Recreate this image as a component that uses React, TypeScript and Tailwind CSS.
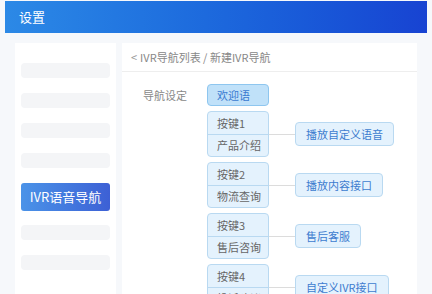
const font = { fontFamily: '"Noto Sans CJK SC", "Noto Sans", sans-serif' };

const keys = [
  { key: "按键1", name: "产品介绍", action: "播放自定义语音" },
  { key: "按键2", name: "物流查询", action: "播放内容接口" },
  { key: "按键3", name: "售后咨询", action: "售后客服" },
  { key: "按键4", name: "投诉建议", action: "自定义IVR接口" },
];

function SideMenu() {
  return (
    <aside className="w-[101px] shrink-0 bg-white pt-[20px] px-[6px] flex flex-col">
      <div className="h-[15px] bg-[#f4f5f7] rounded-sm" />
      <div className="h-[15px] bg-[#f4f5f7] rounded-sm mt-[15px]" />
      <div className="h-[15px] bg-[#f4f5f7] rounded-sm mt-[15px]" />
      <div className="h-[15px] bg-[#f4f5f7] rounded-sm mt-[15px]" />
      <div className="h-[28px] mt-[15px] rounded-[3px] bg-gradient-to-r from-[#4b93e8] to-[#3d60d5] text-white text-[13px] flex items-center justify-center">
        IVR语音导航
      </div>
      <div className="h-[15px] bg-[#f4f5f7] rounded-sm mt-[14px]" />
      <div className="h-[15px] bg-[#f4f5f7] rounded-sm mt-[15px]" />
    </aside>
  );
}

function KeyRow({ item }: { item: (typeof keys)[number] }) {
  return (
    <div className="flex items-center shrink-0">
      <div className="w-[62px] h-[46px] border border-[#b9d9f1] bg-[#e4f2fd] rounded-[4px] flex flex-col text-[11px] text-[#666]">
        <div className="flex-1 flex items-center pl-[9px] border-b border-[#b9d9f1]">{item.key}</div>
        <div className="flex-1 flex items-center pl-[9px]">{item.name}</div>
      </div>
      <div className="w-[26px] h-px bg-[#dcdcdc]" />
      <div className="h-[24px] px-[10px] border border-[#b9d9f1] bg-[#e4f2fd] rounded-[4px] flex items-center text-[11px] text-[#3d7ccf]">
        {item.action}
      </div>
    </div>
  );
}

export default function App() {
  return (
    <div className="w-[432px] h-[294px] overflow-hidden bg-[#f6f8fb]" style={font}>
      {/* Header */}
      <div className="mx-[5px] mt-[1px] h-[32px] bg-gradient-to-r from-[#2c89e6] to-[#1843d2] flex items-center pl-[14px] text-white text-[13px]">
        设置
      </div>

      <div className="flex gap-[6px] pl-[15px] pr-[15px] mt-[10px] h-[260px]">
        <SideMenu />

        {/* Main */}
        <main className="flex-1 bg-white flex flex-col overflow-hidden">
          <div className="h-[29px] shrink-0 border-b border-[#eeeeee] flex items-center pl-[9px] text-[11px] text-[#888]">
            <span className="mr-[3px] text-[#999]">&lt;</span>
            IVR导航列表 / 新建IVR导航
          </div>

          <div className="flex shrink-0 pl-[21px] pt-[12px]">
            <div className="w-[64px] pt-[3px] text-[11px] text-[#888]">导航设定</div>
            <div className="flex flex-col gap-[5px]">
              <div className="w-[62px] h-[22px] shrink-0 border border-[#8ec6ef] bg-[#c0e1f9] rounded-[4px] flex items-center pl-[9px] text-[11px] text-[#3a7ad0]">
                欢迎语
              </div>
              {keys.map((k) => (
                <KeyRow key={k.key} item={k} />
              ))}
            </div>
          </div>
        </main>
      </div>
    </div>
  );
}
